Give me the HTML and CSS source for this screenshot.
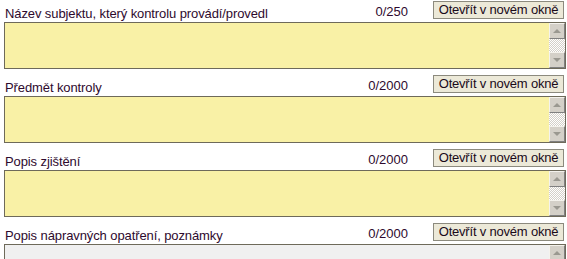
FILE: index.html
```html
<!DOCTYPE html>
<html lang="cs">
<head>
<meta charset="utf-8">
<title>Kontrola</title>
<link rel="stylesheet" href="styles.css">
</head>
<body>
<div class="form">
  <div class="field">
    <div class="head">
      <span class="label">Název subjektu, který kontrolu provádí/provedl</span>
      <span class="count">0/250</span>
      <button class="open" type="button">Otevřít v novém okně</button>
    </div>
    <div class="box">
      <textarea class="text"></textarea>
      <div class="sb"><span class="sbtn up"></span><span class="track"></span><span class="sbtn down"></span></div>
    </div>
  </div>
  <div class="field">
    <div class="head">
      <span class="label">Předmět kontroly</span>
      <span class="count">0/2000</span>
      <button class="open" type="button">Otevřít v novém okně</button>
    </div>
    <div class="box">
      <textarea class="text"></textarea>
      <div class="sb"><span class="sbtn up"></span><span class="track"></span><span class="sbtn down"></span></div>
    </div>
  </div>
  <div class="field">
    <div class="head">
      <span class="label">Popis zjištění</span>
      <span class="count">0/2000</span>
      <button class="open" type="button">Otevřít v novém okně</button>
    </div>
    <div class="box">
      <textarea class="text"></textarea>
      <div class="sb"><span class="sbtn up"></span><span class="track"></span><span class="sbtn down"></span></div>
    </div>
  </div>
  <div class="field">
    <div class="head">
      <span class="label">Popis nápravných opatření, poznámky</span>
      <span class="count">0/2000</span>
      <button class="open" type="button">Otevřít v novém okně</button>
    </div>
    <div class="box grey">
      <textarea class="text"></textarea>
      <div class="sb"><span class="sbtn up"></span><span class="track"></span><span class="sbtn down"></span></div>
    </div>
  </div>
</div>
</body>
</html>
```

FILE: styles.css
```css
html, body {
  margin: 0;
  padding: 0;
  background: #ffffff;
}
body {
  font-family: "Liberation Sans", Arial, sans-serif;
  font-size: 13px;
  color: #2e0a2e;
}
.form {
  display: flex;
  flex-direction: column;
  padding: 1px 1px 0 4px;
}
.field {
  display: flex;
  flex-direction: column;
  gap: 3px;
  margin-bottom: 6px;
}
.head {
  display: flex;
  align-items: flex-end;
  height: 18px;
}
.label {
  flex: 1;
  padding-left: 1px;
  line-height: 15px;
  margin-bottom: -2px;
  letter-spacing: -0.1px;
}
.count {
  line-height: 15px;
  margin-right: 25px;
}
.open {
  width: 131px;
  height: 18px;
  margin: 0 2px 0 0;
  padding: 0;
  font-family: "Liberation Sans", Arial, sans-serif;
  font-size: 13px;
  letter-spacing: -0.2px;
  color: #1a0a1a;
  background: #ece9d8;
  border: 1px solid #8c8a7e;
  border-radius: 0;
  line-height: 16px;
}
.box {
  display: flex;
  height: 45px;
  border: 1px solid #6e6a5a;
  background: #f9f1a6;
}
.box.grey {
  background: #f0f0f0;
}
.text {
  flex: 1;
  border: 0;
  margin: 0;
  padding: 0;
  background: transparent;
  resize: none;
  outline: none;
}
.sb {
  width: 16px;
  display: flex;
  flex-direction: column;
}
.track {
  flex: 1;
  background-color: #ffffff;
  background-image: repeating-conic-gradient(#d4d0c8 0 25%, #ffffff 0 50%);
  background-size: 2px 2px;
}
.sbtn {
  height: 16px;
  box-sizing: border-box;
  background: #d4d0c8;
  border-top: 1px solid #f4f2ec;
  border-left: 1px solid #f4f2ec;
  border-right: 1px solid #808080;
  border-bottom: 1px solid #808080;
  position: relative;
}
.sbtn::after {
  content: "";
  position: absolute;
  left: 3px;
  width: 0;
  height: 0;
  border-left: 4px solid transparent;
  border-right: 4px solid transparent;
}
.up::after {
  top: 5px;
  border-bottom: 4px solid #9a9890;
}
.down::after {
  top: 5px;
  border-top: 4px solid #9a9890;
}
```
